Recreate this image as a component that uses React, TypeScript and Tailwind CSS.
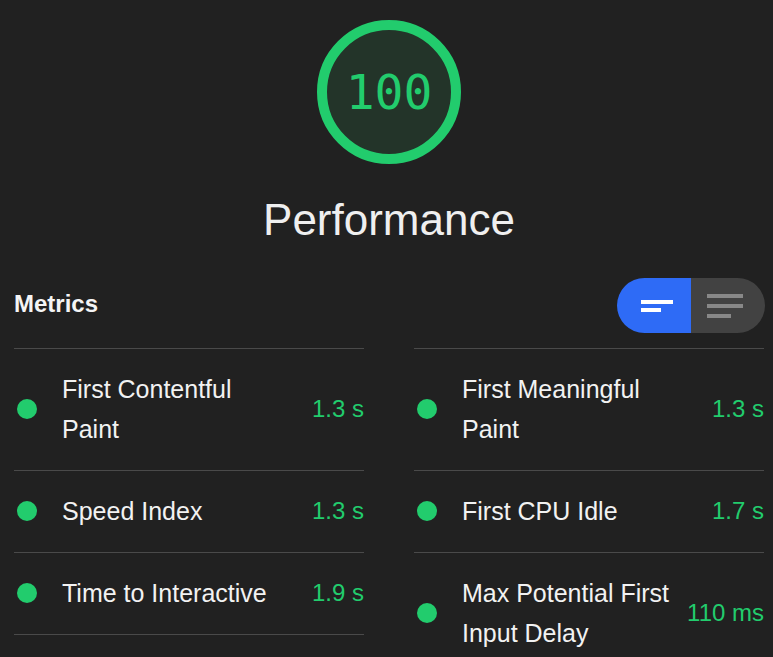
import React from "react";

const leftMetrics = [
  { label: "First Contentful Paint", value: "1.3 s" },
  { label: "Speed Index", value: "1.3 s" },
  { label: "Time to Interactive", value: "1.9 s" },
];

const rightMetrics = [
  { label: "First Meaningful Paint", value: "1.3 s" },
  { label: "First CPU Idle", value: "1.7 s" },
  { label: "Max Potential First Input Delay", value: "110 ms" },
];

const MetricRow = ({ label, value }: { label: string; value: string }) => (
  <div className="flex items-center border-t border-[#4a4a4a] pt-[20px] pb-[21px]">
    <div className="ml-[3px] mr-[25px] h-5 w-5 shrink-0 rounded-full bg-[#22cc6d]" />
    <div className="w-[220px] text-[25px] leading-[40px] text-[#f2f2f2]">{label}</div>
    <div className="ml-auto text-[24px] leading-[40px] text-[#22cc6d] whitespace-nowrap">
      {value}
    </div>
  </div>
);

export default function App() {
  return (
    <div
      className="min-h-screen bg-[#212121] pl-[14px] pr-[9px] pt-[20px]"
      style={{ fontFamily: '"Liberation Sans", Arial, sans-serif' }}
    >
      {/* Score gauge */}
      <div className="flex flex-col items-center">
        <div className="flex h-[144px] w-[144px] items-center justify-center rounded-full border-[10px] border-[#22cc6d] bg-[#233429]">
          <span
            className="text-[48px] leading-none text-[#22cc6d]"
            style={{ fontFamily: '"DejaVu Sans Mono", monospace' }}
          >
            100
          </span>
        </div>
        <h1 className="mt-[30px] text-[44px] leading-[52px] text-[#efefef]">
          Performance
        </h1>
      </div>

      {/* Metrics header */}
      <div className="mt-[32px] flex items-center justify-between">
        <h2 className="-mt-[3px] text-[24px] font-bold text-[#f5f5f5]">Metrics</h2>
        <div className="mr-[-1px] flex h-[55px] overflow-hidden rounded-full">
          <div className="flex w-[74px] items-center bg-[#2e6bf6] pl-[24px] pt-[1px]">
            <svg width="32" height="12" viewBox="0 0 32 12">
              <rect x="0" y="0" width="32" height="4" fill="#ffffff" />
              <rect x="0" y="8" width="20" height="4" fill="#ffffff" />
            </svg>
          </div>
          <div className="flex w-[74px] items-center bg-[#424242] pl-[16px] pt-[1px]">
            <svg width="36" height="24" viewBox="0 0 36 24">
              <rect x="0" y="0" width="36" height="4" fill="#888888" />
              <rect x="0" y="10" width="36" height="4" fill="#888888" />
              <rect x="0" y="20" width="24" height="4" fill="#888888" />
            </svg>
          </div>
        </div>
      </div>

      {/* Metrics grid */}
      <div className="mt-[15px] grid grid-cols-2 gap-x-[50px]">
        <div className="border-b border-[#4a4a4a] self-start">
          {leftMetrics.map((m) => (
            <MetricRow key={m.label} label={m.label} value={m.value} />
          ))}
        </div>
        <div className="self-start">
          {rightMetrics.map((m) => (
            <MetricRow key={m.label} label={m.label} value={m.value} />
          ))}
        </div>
      </div>
    </div>
  );
}
